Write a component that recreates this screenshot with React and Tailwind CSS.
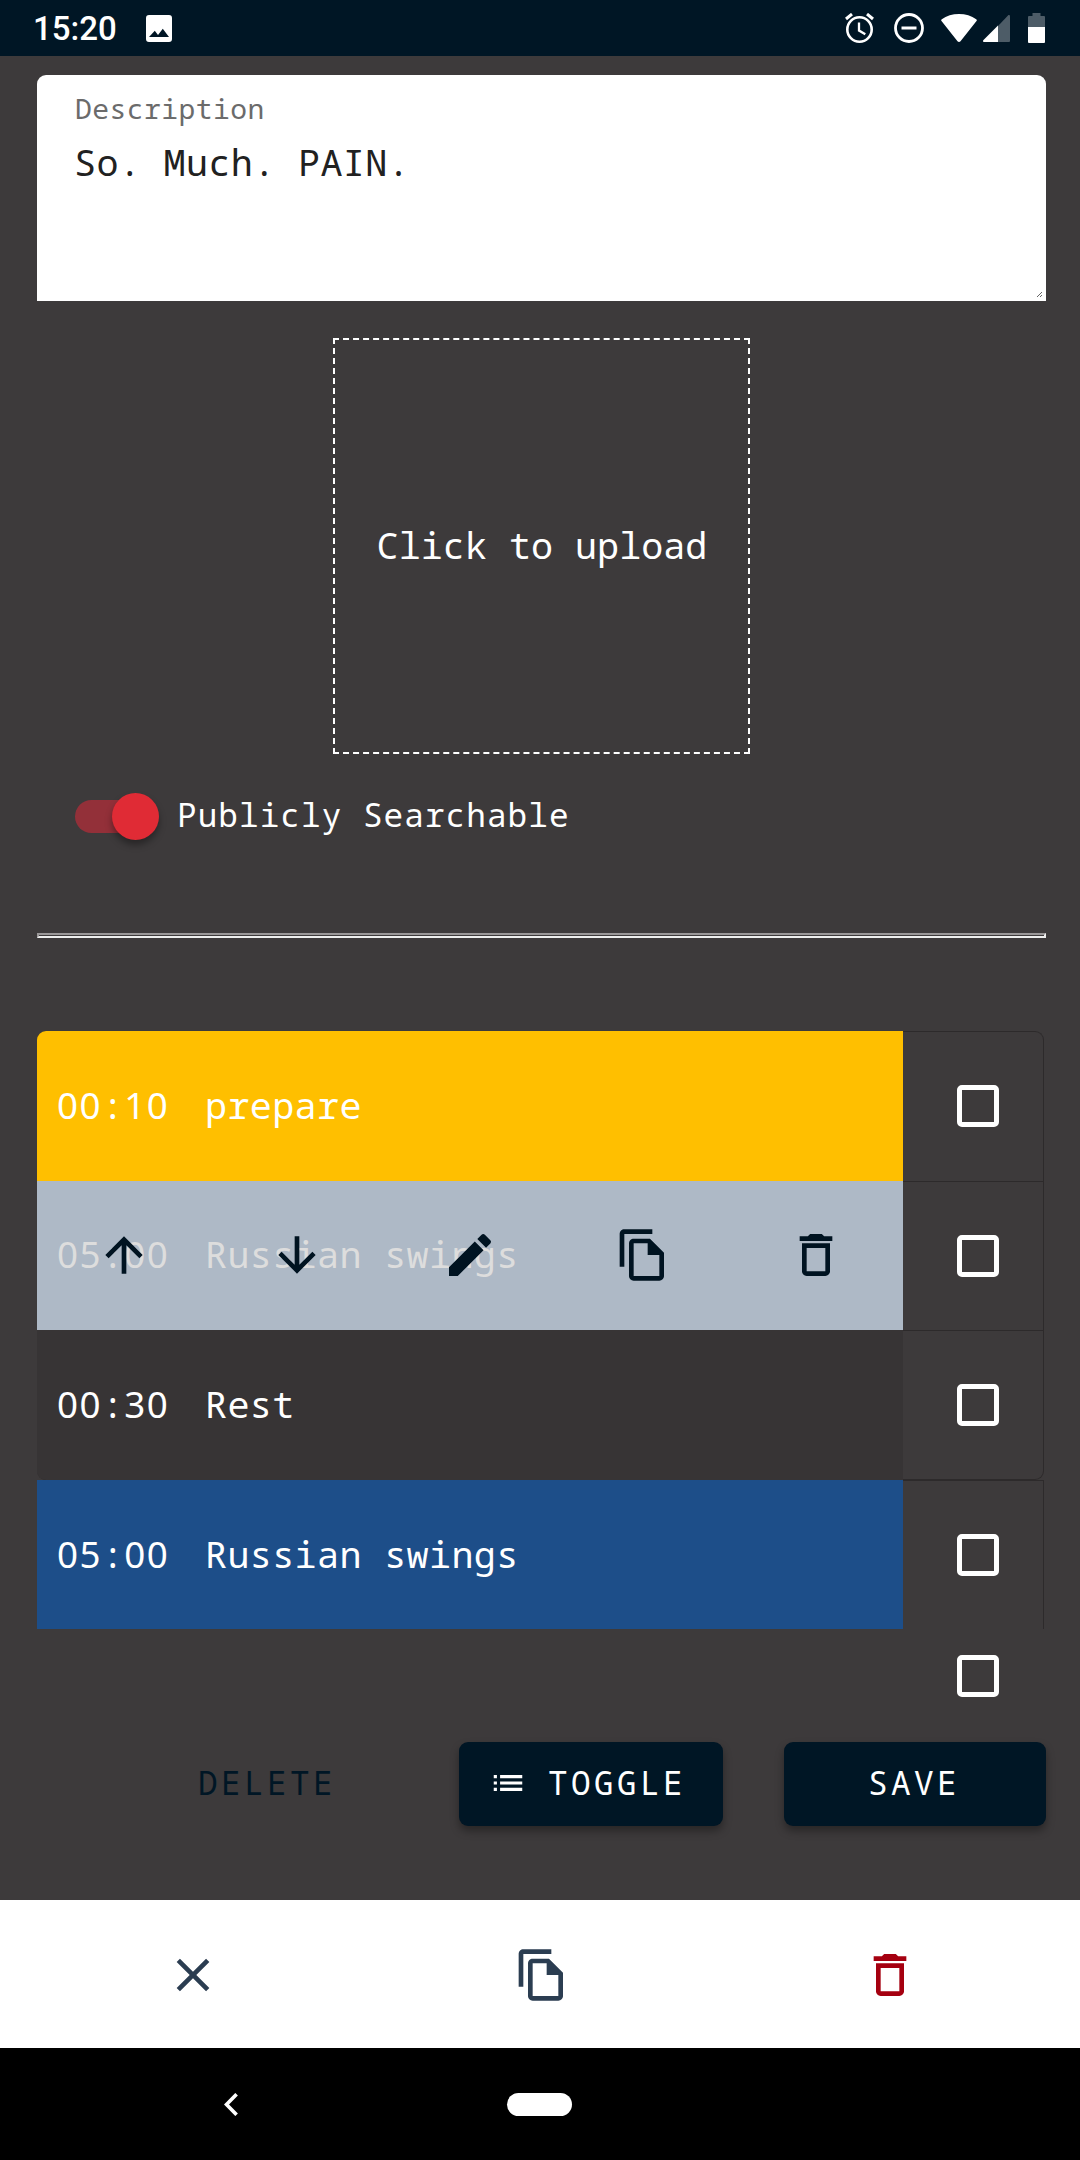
const MONO = "font-['Noto_Sans_Mono','DejaVu_Sans_Mono',monospace]";

const PATHS = {
  up: 'M4 12l1.41 1.41L11 7.83V20h2V7.83l5.58 5.59L20 12l-8-8-8 8z',
  down: 'M20 12l-1.41-1.41L13 16.17V4h-2v12.17l-5.58-5.59L4 12l8 8 8-8z',
  edit: 'M3 17.25V21h3.75L17.81 9.94l-3.75-3.75L3 17.25zM20.71 7.04c.39-.39.39-1.02 0-1.41l-2.34-2.34c-.39-.39-1.02-.39-1.41 0l-1.83 1.83 3.75 3.75 1.83-1.83z',
  copy: 'M16 1H4c-1.1 0-2 .9-2 2v14h2V3h12V1zm-1 4H8c-1.1 0-1.99.9-1.99 2L6 21c0 1.1.89 2 1.99 2H19c1.1 0 2-.9 2-2V11l-6-6zM8 21V7h6v5h5v9H8z',
  trash: 'M16 9v10H8V9h8m-1.5-6h-5l-1 1H5v2h14V4h-3.5l-1-1zM18 7H6v12c0 1.1.9 2 2 2h8c1.1 0 2-.9 2-2V7z',
  close: 'M19 6.41L17.59 5 12 10.59 6.41 5 5 6.41 10.59 12 5 17.59 6.41 19 12 13.41 17.59 19 19 17.59 13.41 12z',
  list: 'M3 13h2v-2H3v2zm0 4h2v-2H3v2zm0-8h2V7H3v2zm4 4h14v-2H7v2zm0 4h14v-2H7v2zM7 7v2h14V7H7z',
};

function Icon({ name, className = 'size-14' }) {
  return (
    <svg viewBox="0 0 24 24" fill="currentColor" className={className}>
      <path d={PATHS[name]} />
    </svg>
  );
}

function StatusBar() {
  return (
    <header className="flex h-14 shrink-0 items-center bg-[#001625] pl-[33px] pr-[35px] text-white">
      <span className="mt-px font-['Roboto',sans-serif] text-[33px] font-medium leading-[56px]">15:20</span>
      <svg viewBox="0 0 26 27" className="ml-[29px] h-[27px] w-[26px]">
        <path fill="#fff" fillRule="evenodd" d="M3 0h20a3 3 0 0 1 3 3v21a3 3 0 0 1-3 3H3a3 3 0 0 1-3-3V3a3 3 0 0 1 3-3zM3 22h20l-6.200-8.200-4.800 6.200-3.200-4.200z" />
      </svg>
      <div className="ml-auto flex items-center">
        <svg viewBox="0 0 30 30" className="size-[30px]" fill="none" stroke="#fff" strokeWidth="2.600">
          <circle cx="14.500" cy="16.500" r="12.200" />
          <path d="M1 6L7 1M28 6L22 1" strokeWidth="3" />
          <path d="M14 9.500v8l6.300 3.700" strokeWidth="2.300" />
        </svg>
        <svg viewBox="0 0 30 30" className="ml-[19px] size-[30px]" fill="none" stroke="#fff" strokeWidth="2.800">
          <circle cx="15" cy="15" r="13.500" />
          <path d="M7.500 15h15" strokeWidth="3" />
        </svg>
        <svg viewBox="0 0 36 28" className="ml-[17px] h-7 w-9" fill="#fff">
          <path d="M0.800 5.200C5.500 1.800 11.500 0 18 0s12.500 1.800 17.200 5.200c.7.500.8 1.200.3 1.900L19.500 27.200c-.8 1-2.200 1-3 0L.5 7.100C0 6.400.1 5.700.8 5.200z" />
        </svg>
        <svg viewBox="0 0 27 27" className="ml-[6px] size-[27px]">
          <path d="M15 11L25 .5c.8-.8 2-.3 2 .8V26a1 1 0 0 1-1 1H15z" fill="#4d5c67" />
          <path d="M15 10.500V27H1.300C0 27-.4 26 .5 25z" fill="#fff" />
        </svg>
        <svg viewBox="0 0 17 30" className="ml-[18px] h-[30px] w-[17px]">
          <path d="M4.500 0h8v3H16a1 1 0 0 1 1 1v10H0V4a1 1 0 0 1 1-1h3.500z" fill="#4d5c67" />
          <path d="M0 14h17v15a1 1 0 0 1-1 1H1a1 1 0 0 1-1-1z" fill="#fff" />
        </svg>
      </div>
    </header>
  );
}

function Checkbox() {
  return <span className="block size-[42px] rounded-[5px] border-[5px] border-white" />;
}

// Digits use the proportional face, whose zero is plain, on the monospace pitch.
function Time({ value }) {
  const [minutes, seconds] = value.split(':');
  return (
    <span className="flex w-[148px]">
      <span className="font-['Noto_Sans',sans-serif] tracking-[1.4px]">{minutes}</span>
      <span>:</span>
      <span className="font-['Noto_Sans',sans-serif] tracking-[1.4px]">{seconds}</span>
    </span>
  );
}

const ROWS = [
  {
    time: '00:10',
    name: 'prepare',
    row: 'h-[150px] rounded-t-[9px] border-t',
    fill: 'rounded-tl-[9px] bg-[#ffbf00] pb-[3px] text-white',
    check: 'pb-px',
  },
  {
    time: '05:00',
    name: 'Russian swings',
    row: 'h-[149px] border-t',
    fill: 'bg-[#aeb9c6] pb-[3px] text-[#dddddd]',
    check: '',
    actions: true,
  },
  {
    time: '00:30',
    name: 'Rest',
    row: 'h-[150px] rounded-b-[9px] border-y',
    fill: '-mb-px rounded-bl-[9px] bg-[#373435] pb-[3px] text-white',
    check: '',
  },
  {
    time: '05:00',
    name: 'Russian swings',
    row: 'h-[149px] border-t',
    fill: 'bg-[#1d4e89] pb-[2px] text-white',
    check: '',
  },
];

function Row({ item }) {
  return (
    <li className={`flex w-[1007px] border-r border-[#2d2a2b] ${item.row}`}>
      <div className={`relative -mt-px flex w-[866px] items-center pl-[20px] text-[36.75px] leading-[48px] tracking-[0.35px] ${item.fill}`}>
        <Time value={item.time} />
        <span>{item.name}</span>
        {item.actions && (
          <div className="absolute inset-0 grid grid-cols-5 place-items-center pb-px text-[#001321]">
            <Icon name="up" />
            <Icon name="down" />
            <Icon name="edit" />
            <Icon name="copy" />
            <Icon name="trash" />
          </div>
        )}
      </div>
      <div className={`flex items-center pl-[54px] ${item.check}`}>
        <Checkbox />
      </div>
    </li>
  );
}

export default function App() {
  return (
    <div className={`flex h-[2160px] w-[1080px] flex-col overflow-hidden bg-[#3d3a3b] ${MONO}`}>
      <StatusBar />
      <main className="flex flex-1 flex-col pl-[37px] pr-[34px] pt-[19px]">
        <section className="relative h-[226px] rounded-t-[9px] bg-white pl-[37px] pt-[17px]">
          <div className="pl-px text-[28px] leading-8 tracking-[0.45px] text-[#6b6b6b]">Description</div>
          <div className="mt-3.5 text-[36.75px] leading-[48px] tracking-[0.35px] text-[#212121]">So. Much. PAIN.</div>
          <svg viewBox="0 0 5 5" className="absolute bottom-1 right-1 size-[5px]" stroke="#555" strokeWidth="0.900">
            <path d="M0 5L5 0M3 5L5 3" />
          </svg>
        </section>

        <div className="mt-[37px] flex h-[416px] w-[417px] items-center justify-center self-center border-2 border-dashed border-white pb-[3px] pl-px text-[36.75px] leading-[48px] text-white">
          Click to upload
        </div>

        <div className="mt-[39px] flex h-[47px] items-center pl-[38px]">
          <span className="flex h-[33px] w-[77px] items-center justify-end rounded-full bg-[#933039]">
            <span className="-mr-[7px] size-[47px] shrink-0 rounded-full bg-[#e02b35] shadow-[0_5px_7px_rgba(0,0,0,0.35)]" />
          </span>
          <span className="mb-[3px] ml-[25px] text-[32.7px] leading-[42px] tracking-[1.05px] text-white">Publicly Searchable</span>
        </div>

        <div className="mt-[93px] h-[5px] border-2 border-b-[#eeeeee] border-l-[#9a9798] border-r-[#eeeeee] border-t-[#9a9798]" />

        <ul className="mt-[93px]">
          {ROWS.map((item, i) => (
            <Row key={i} item={item} />
          ))}
        </ul>

        <div className="mr-[47px] mt-[26px] self-end">
          <Checkbox />
        </div>

        <div className="mt-[45px] flex h-[84px] text-[32.7px] leading-[42px] tracking-[3.4px]">
          <button className="ml-[99px] flex h-full w-[262px] items-center justify-center pb-[3px] text-[#001625]">DELETE</button>
          <button className="ml-[61px] flex h-full w-[264px] items-center rounded-[9px] bg-[#001625] pl-[30px] text-white shadow-[0_5px_8px_rgba(0,0,0,0.35)]">
            <Icon name="list" className="mb-[2px] size-[38px]" />
            <span className="mb-[3px] ml-[21px]">TOGGLE</span>
          </button>
          <button className="ml-[61px] flex h-full w-[262px] items-center justify-center rounded-[9px] bg-[#001625] pb-[3px] pr-[2px] text-white shadow-[0_5px_8px_rgba(0,0,0,0.35)]">
            SAVE
          </button>
        </div>
      </main>

      <div className="flex h-[148px] shrink-0 items-center justify-between bg-white pl-[165px] pr-[162px] pt-[2px] text-[#2b3d51]">
        <Icon name="close" />
        <Icon name="copy" />
        <Icon name="trash" className="size-14 text-[#a50010]" />
      </div>

      <nav className="flex h-28 shrink-0 items-center bg-black pl-[224px]">
        <svg viewBox="0 0 14 23" className="h-[23px] w-[14px]" fill="none" stroke="#fff" strokeWidth="3.600">
          <path d="M12.600 1.200L2.500 11.500L12.600 21.800" />
        </svg>
        <span className="ml-[269px] h-[23px] w-[65px] rounded-full bg-white" />
      </nav>
    </div>
  );
}
